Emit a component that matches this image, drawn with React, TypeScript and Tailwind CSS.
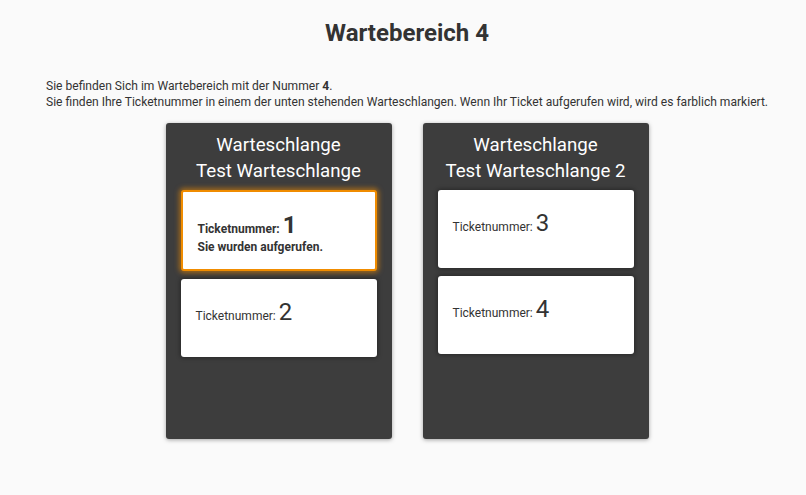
import React from "react";

function Card({ n, called }: { n: number; called?: boolean }) {
  return (
    <div
      className={
        "bg-white rounded-[3px] px-[15px] min-h-[78px] text-[#333] " +
        (called
          ? "border-2 border-[#f08c00] shadow-[0_0_5px_2px_rgba(240,140,0,0.55)] font-bold pt-[19px] pb-[14px]"
          : "shadow-[0_0_4px_1px_rgba(0,0,0,0.35)] pt-[19px] pb-[12px]")
      }
    >
      <div className="text-[24px] leading-[28px]">
        <span className="text-[12px] leading-none">Ticketnummer: </span>
        <span>{n}</span>
      </div>
      {called && <div className="text-[12px] leading-[16px]">Sie wurden aufgerufen.</div>}
    </div>
  );
}

function Panel({ name, children }: { name: string; children: React.ReactNode }) {
  return (
    <div className="w-[226px] h-[316px] bg-[#3d3d3d] rounded-[3px] shadow-[0_1px_4px_rgba(0,0,0,0.35)] px-[15px] pt-[9px]">
      <div className="text-white text-[18.7px] leading-[26px] text-center">
        <div>Warteschlange</div>
        <div>{name}</div>
      </div>
      <div className="mt-[6px] flex flex-col gap-[8px]">{children}</div>
    </div>
  );
}

export default function App() {
  return (
    <div
      className="w-[806px] h-[495px] bg-[#fafafa] text-[#333] overflow-hidden pl-[8px]"
      style={{ fontFamily: "Roboto, 'Liberation Sans', sans-serif" }}
    >
      <h1 className="text-center font-bold text-[24px] leading-[32px] pt-[17px]">Wartebereich 4</h1>
      <div className="mt-[29px] pl-[38px] text-[12.07px] leading-[16px]">
        <div>
          Sie befinden Sich im Wartebereich mit der Nummer <b>4</b>.
        </div>
        <div>
          Sie finden Ihre Ticketnummer in einem der unten stehenden Warteschlangen. Wenn Ihr Ticket aufgerufen wird, wird es farblich markiert.
        </div>
      </div>
      <div className="mt-[13px] flex justify-center gap-[31px]">
        <Panel name="Test Warteschlange">
          <Card n={1} called />
          <Card n={2} />
        </Panel>
        <Panel name="Test Warteschlange 2">
          <Card n={3} />
          <Card n={4} />
        </Panel>
      </div>
    </div>
  );
}
